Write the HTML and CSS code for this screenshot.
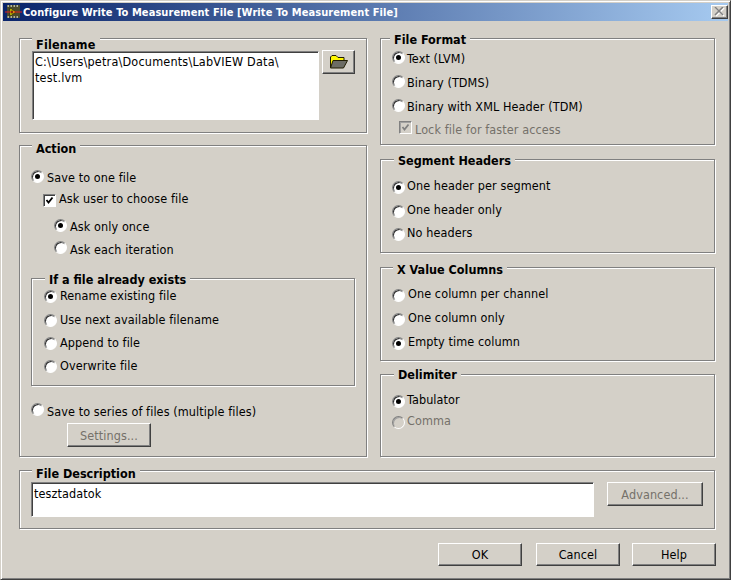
FILE: index.html
```html
<!DOCTYPE html>
<html lang="en">
<head>
<meta charset="utf-8">
<title>Configure Write To Measurement File</title>
<link rel="stylesheet" href="styles.css">
</head>
<body>
<div class="dialog">
  <div class="titlebar">
    <svg class="app-icon" width="18" height="14" viewBox="0 0 18 14">
      <rect x="2" y="0" width="13" height="13" fill="#4a4a2c"/>
      <path d="M2.500 1h12M2.500 12h12" stroke="#d8d8c0" stroke-width="1.400" stroke-dasharray="1.500 1.500"/>
      <path d="M5 3v8l6-4z" fill="#f4e800" stroke="#181800" stroke-width=".6"/>
      <path d="M6 5.500h2v3H6z" fill="#303000"/>
      <path d="M0 7h17" stroke="#e02020" stroke-width="1"/>
    </svg>
    <span class="title-text">Configure Write To Measurement File [Write To Measurement File]</span>
    <span class="close-btn">
      <svg width="11" height="10" viewBox="0 0 11 10">
        <path d="M2 1l8 8M10 1L2 9" stroke="#fff" stroke-width="1.500"/>
        <path d="M1 0l8 8M9 0L1 8" stroke="#808080" stroke-width="1.500"/>
      </svg>
    </span>
  </div>
  <div class="columns">
    <div class="col col-left">
      <section class="group g-filename">
        <h2 class="legend lg-filename">Filename</h2>
        <div class="file-row">
          <div class="field field-path">C:\Users\petra\Documents\LabVIEW Data\<br>test.lvm</div>
          <button class="btn btn-browse" type="button">
            <svg width="20" height="14" viewBox="0 0 20 14">
              <path d="M1.500 12.500V2L3 .5h4L9 2.500h6V5" fill="#fff700" stroke="#201c00"/>
              <path d="M4 5.500h14.500l-4 7.500H1.500z" fill="#6c6c64" stroke="#201c00"/>
            </svg>
          </button>
        </div>
      </section>
      <section class="group g-action">
        <h2 class="legend lg-action">Action</h2>
        <label class="row row-save"><span class="radio on shift-u1"></span>Save to one file</label>
        <label class="row row-ask"><span class="check shift-d2">
          <svg width="9" height="9" viewBox="0 0 9 9"><path d="M1.500 4l2 2.500 4-5" fill="none" stroke="#000" stroke-width="1.800"/></svg>
        </span>Ask user to choose file</label>
        <label class="row row-once"><span class="radio on shift-u1"></span>Ask only once</label>
        <label class="row row-each"><span class="radio shift-u2"></span>Ask each iteration</label>
        <section class="group g-exists">
          <h2 class="legend lg-exists">If a file already exists</h2>
          <label class="row row-tall"><span class="radio on shift-d1"></span>Rename existing file</label>
          <label class="row row-tall"><span class="radio shift-d1"></span>Use next available filename</label>
          <label class="row row-mid"><span class="radio shift-d1"></span>Append to file</label>
          <label class="row row-mid"><span class="radio shift-d1"></span>Overwrite file</label>
        </section>
        <label class="row row-series"><span class="radio shift-u2"></span>Save to series of files (multiple files)</label>
        <button class="btn btn-settings off" type="button">Settings...</button>
      </section>
    </div>
    <div class="col col-right">
      <section class="group g-format tight">
        <h2 class="legend lg-format">File Format</h2>
        <label class="row"><span class="radio on shift-u1"></span>Text (LVM)</label>
        <label class="row"><span class="radio shift-u1"></span>Binary (TDMS)</label>
        <label class="row"><span class="radio shift-u1"></span>Binary with XML Header (TDM)</label>
        <label class="row row-lock off"><span class="check check-off shift-u2">
          <svg width="9" height="9" viewBox="0 0 9 9"><path d="M1.500 4l2 2.500 4-5" fill="none" stroke="#808080" stroke-width="1.800"/></svg>
        </span>Lock file for faster access</label>
      </section>
      <section class="group g-segment tight">
        <h2 class="legend lg-segment">Segment Headers</h2>
        <label class="row"><span class="radio on shift-d2"></span>One header per segment</label>
        <label class="row"><span class="radio shift-d2"></span>One header only</label>
        <label class="row row-short"><span class="radio shift-d2"></span>No headers</label>
      </section>
      <section class="group g-xvalue">
        <h2 class="legend lg-xvalue">X Value Columns</h2>
        <label class="row"><span class="radio shift-d2"></span>One column per channel</label>
        <label class="row"><span class="radio shift-d2"></span>One column only</label>
        <label class="row"><span class="radio on shift-d2"></span>Empty time column</label>
      </section>
      <section class="group g-delim tight">
        <h2 class="legend lg-delim">Delimiter</h2>
        <label class="row row-short"><span class="radio on shift-d2"></span>Tabulator</label>
        <label class="row row-min off"><span class="radio radio-off shift-d2"></span>Comma</label>
      </section>
    </div>
  </div>
  <section class="group g-desc">
    <h2 class="legend lg-desc">File Description</h2>
    <div class="desc-row">
      <div class="field field-desc">tesztadatok</div>
      <button class="btn btn-advanced off" type="button">Advanced...</button>
    </div>
  </section>
  <div class="actions">
    <button class="btn btn-action" type="button">OK</button>
    <button class="btn btn-action" type="button">Cancel</button>
    <button class="btn btn-action btn-help" type="button">Help</button>
  </div>
</div>
</body>
</html>
```
FILE: styles.css
```css
* { box-sizing: border-box; }
html, body { margin: 0; padding: 0; }
body {
  width: 731px;
  height: 580px;
  overflow: hidden;
  background: #d4d0c8;
  font-family: "DejaVu Sans Condensed", "DejaVu Sans", sans-serif;
  font-size: 12.5px;
  letter-spacing: 0.1px;
  color: #000;
}
.dialog {
  width: 731px;
  height: 580px;
  padding-top: 2px;
  background: #d4d0c8;
  border: 1px solid;
  border-color: #d4d0c8 #404040 #404040 #d4d0c8;
  box-shadow: inset 1px 1px 0 #ffffff, inset -1px -1px 0 #808080;
}
.titlebar {
  display: flex;
  align-items: center;
  height: 18px;
  margin: 0 2px;
  padding-left: 2px;
  background: linear-gradient(90deg, #0a246a 0%, #a6caf0 100%);
  color: #fff;
  font-size: 11px;
  font-weight: bold;
  letter-spacing: 0.08px;
}
.app-icon { flex: none; }
.title-text { flex: 1; white-space: nowrap; }
.close-btn {
  flex: none;
  display: flex;
  align-items: center;
  justify-content: center;
  width: 17px;
  height: 14px;
  background: #d4d0c8;
  border: 1px solid;
  border-color: #ffffff #404040 #404040 #ffffff;
  box-shadow: inset -1px -1px 0 #808080;
}
.columns {
  display: flex;
  gap: 13px;
  margin: 17px 0 0 18px;
}
.col { display: flex; flex-direction: column; }
.col-left { width: 348px; gap: 12px; }
.col-right { width: 335px; }
.group {
  position: relative;
  border: 1px solid #808080;
  box-shadow: 1px 1px 0 #ffffff, inset 1px 1px 0 #ffffff;
}
.legend {
  position: absolute;
  margin: 0;
  padding: 0 4px;
  height: 15px;
  line-height: 15px;
  font-size: 12.5px;
  font-weight: bold;
  letter-spacing: 0;
  background: #d4d0c8;
  white-space: nowrap;
}
.lg-filename { top: -2px; left: 12px; height: 14px; letter-spacing: 0.2px; }
.lg-action { top: -5px; left: 12px; }
.lg-exists { top: -7px; left: 13px; }
.lg-format { top: -7px; left: 9px; }
.lg-segment { top: -7px; left: 13px; }
.lg-xvalue { top: -6px; left: 12px; }
.lg-delim { top: -8px; left: 13px; }
.lg-desc { top: -5px; left: 12px; }
.row {
  display: flex;
  align-items: center;
  gap: 3px;
  height: 24px;
  white-space: nowrap;
}
.tight .row { gap: 2px; }
.row-short { height: 22px; }
.row-min { height: 20px; }
.row-tall { height: 24px; }
.row-mid { height: 23px; }
.radio {
  flex: none;
  position: relative;
  display: block;
  width: 13px;
  height: 13px;
  border-radius: 50%;
  background: #fff;
  border: 1px solid;
  border-color: #808080 #ffffff #ffffff #808080;
  box-shadow: inset 1px 1px 0 #303030;
}
.radio.on::after {
  content: "";
  position: absolute;
  left: 3px;
  top: 3px;
  width: 5px;
  height: 5px;
  border-radius: 50%;
  background: #000;
}
.radio-off {
  background: #d4d0c8;
  box-shadow: inset 1px 1px 0 #a0a0a0;
}
.shift-u1 { margin-top: -2px; }
.shift-u2 { margin-top: -4px; }
.shift-d1 { margin-top: 2px; }
.shift-d2 { margin-top: 4px; }
.check {
  flex: none;
  display: flex;
  align-items: center;
  justify-content: center;
  width: 13px;
  height: 13px;
  background: #fff;
  border: 1px solid;
  border-color: #808080 #ffffff #ffffff #808080;
  box-shadow: inset 1px 1px 0 #404040;
}
.check-off {
  background: #d4d0c8;
  box-shadow: inset 1px 1px 0 #a0a0a0;
}
.off { color: #75716a; }
.btn {
  display: flex;
  align-items: center;
  justify-content: center;
  padding: 0;
  font: inherit;
  letter-spacing: inherit;
  color: #000;
  background: #d4d0c8;
  border: 1px solid;
  border-color: #ffffff #404040 #404040 #ffffff;
  box-shadow: inset -1px -1px 0 #808080;
}
.btn.off { color: #75716a; }
.g-filename { height: 95px; }
.file-row {
  display: flex;
  align-items: flex-start;
  gap: 3px;
  margin: 12px 0 0 12px;
}
.field {
  background: #fff;
  border: 1px solid;
  border-color: #808080 #ffffff #ffffff #808080;
  box-shadow: inset 1px 1px 0 #404040;
  padding: 2px 2px;
  line-height: 16px;
  white-space: nowrap;
}
.field-path { width: 287px; height: 69px; letter-spacing: 0.2px; }
.btn-browse { width: 33px; height: 24px; margin-top: -1px; }
.g-action { height: 312px; padding: 20px 0 0 11px; }
.row-save { height: 22px; }
.row-ask { height: 21px; margin-left: 12px; }
.row-once { height: 23px; margin: 6px 0 0 23px; }
.row-each { height: 23px; margin-left: 23px; }
.g-exists {
  width: 324px;
  height: 108px;
  margin-top: 17px;
  padding: 4px 0 0 12px;
}
.row-series { height: 22px; margin-top: 14px; }
.btn-settings { width: 84px; height: 24px; margin: 1px 0 0 36px; }
.g-format { height: 107px; padding: 7px 0 0 11px; }
.row-lock { margin-left: 7px; height: 22px; gap: 3px !important; }
.g-segment { height: 94px; margin-top: 14px; padding: 13px 0 0 11px; }
.g-xvalue { height: 94px; margin-top: 14px; padding: 13px 0 0 11px; }
.g-delim { height: 83px; margin-top: 13px; padding: 13px 0 0 11px; }
.g-desc {
  width: 696px;
  height: 59px;
  margin: 13px 0 0 18px;
  padding: 11px 0 0 11px;
}
.desc-row { display: flex; align-items: flex-start; gap: 13px; }
.field-desc { width: 563px; height: 35px; padding-top: 3px; }
.btn-advanced { width: 96px; height: 24px; }
.actions {
  display: flex;
  margin: 14px 0 0 437px;
  gap: 14px;
}
.btn-action { width: 84px; height: 23px; }
.btn-help { margin-left: -2px; }
```
